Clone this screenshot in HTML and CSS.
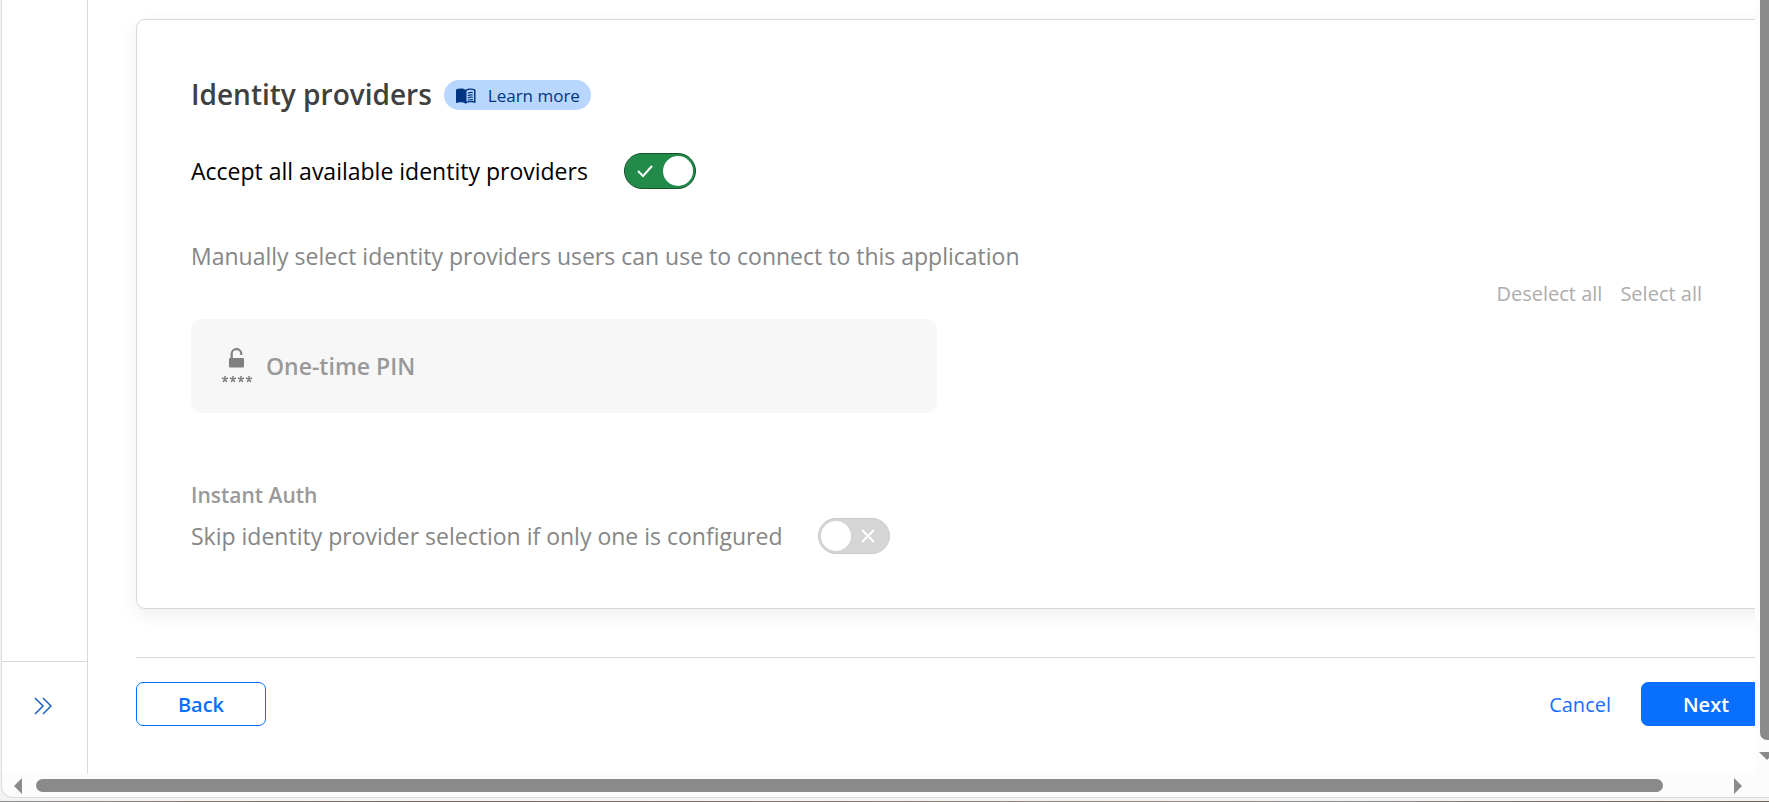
FILE: index.html
```html
<!DOCTYPE html>
<html lang="en">
<head>
  <meta charset="UTF-8">
  <meta name="viewport" content="width=device-width, initial-scale=1.0">
  <title>Identity providers</title>
  <link rel="stylesheet" href="styles.css">
</head>
<body>
  <div class="window">
    <div class="view">
      <nav class="sidebar" aria-label="Sidebar">
        <div class="sidebar-footer">
          <button type="button" class="expand" aria-label="Expand sidebar">
            <svg width="18" height="18" viewBox="0 0 18 18" fill="none" stroke="currentColor" stroke-width="1.5">
              <path d="M1 1l8 8-8 8M9 1l8 8-8 8"/>
            </svg>
          </button>
        </div>
      </nav>

      <main class="main">
        <div class="content">
          <section class="card">
            <div class="card-header">
              <h2>Identity providers</h2>
              <a href="#" class="pill">
                <svg width="20" height="16" viewBox="0 0 20 16">
                  <path fill="currentColor" d="M0 1.500C3 0 7 0 9.500 1.700C12 0 16 0 19.500 1.500V15C16 14 12.500 14 9.500 15.800C7 14 3 14 0 15Z"/>
                  <path fill="#b9d6ff" d="M10.500 2.800C13 1.500 16 1.600 18 2.500V13.300C16 12.600 13 12.700 10.500 13.700Z"/>
                  <path fill="none" stroke="currentColor" stroke-width="1.200" d="M11.800 5.200q2.500-1.200 5-.6M11.800 7.600q2.500-1.200 5-.6M11.800 10q2.500-1.200 5-.6M11.800 12.300q2.500-1.200 5-.6"/>
                </svg>
                Learn more
              </a>
            </div>

            <div class="setting">
              <label for="accept-all">Accept all available identity providers</label>
              <span class="toggle">
                <input type="checkbox" id="accept-all" checked>
                <svg width="16" height="14" viewBox="0 0 16 14" fill="none" stroke="#fff" stroke-width="2">
                  <path d="M1 7l5 5 9-10"/>
                </svg>
              </span>
            </div>

            <p class="hint">Manually select identity providers users can use to connect to this application</p>
            <div class="bulk-actions">
              <button type="button" disabled>Deselect all</button>
              <button type="button" disabled>Select all</button>
            </div>

            <div class="providers">
              <div class="provider">
                <svg width="32" height="36" viewBox="0 0 32 36">
                  <path fill="none" stroke="#808080" stroke-width="2.200" d="M10.700 11V6.500a4.800 4.800 0 0 1 9.600-1v1.500"/>
                  <rect x="8" y="10" width="15" height="9.500" rx="1" fill="#808080"/>
                  <path fill="none" stroke="#808080" stroke-width="1.500" d="M4 28v3.200M1 30l3 1.200 3-1.200M2.200 34l1.800-2.800 1.800 2.800M12 28v3.200M9 30l3 1.200 3-1.200M10.200 34l1.800-2.800 1.800 2.800M20 28v3.200M17 30l3 1.200 3-1.200M18.200 34l1.800-2.800 1.800 2.800M28 28v3.200M25 30l3 1.200 3-1.200M26.200 34l1.800-2.800 1.800 2.800"/>
                </svg>
                One-time PIN
              </div>
            </div>

            <h3>Instant Auth</h3>
            <div class="setting disabled">
              <label for="instant-auth">Skip identity provider selection if only one is configured</label>
              <span class="toggle">
                <input type="checkbox" id="instant-auth" disabled>
                <svg width="14" height="14" viewBox="0 0 14 14" fill="none" stroke="#fff" stroke-width="2">
                  <path d="M1 1l12 12M13 1L1 13"/>
                </svg>
              </span>
            </div>
          </section>

          <footer class="actions">
            <button type="button" class="btn btn-outline">Back</button>
            <a href="#" class="cancel">Cancel</a>
            <button type="button" class="btn btn-primary">Next</button>
          </footer>
        </div>
      </main>

      <div class="scroll-y">
        <div class="thumb-y"></div>
        <svg width="16" height="8" viewBox="0 0 16 8"><path fill="#8a8a8a" d="M0 0h16L8 8z"/></svg>
      </div>
    </div>

    <div class="scroll-x">
      <svg width="8" height="16" viewBox="0 0 8 16"><path fill="#8a8a8a" d="M8 0v16L0 8z"/></svg>
      <div class="track-x"><div class="thumb-x"></div></div>
      <svg width="8" height="16" viewBox="0 0 8 16"><path fill="#8a8a8a" d="M0 0v16l8-8z"/></svg>
    </div>
  </div>
  <div class="desktop"></div>
</body>
</html>
```
FILE: styles.css
```css
* {
  box-sizing: border-box;
}

body {
  margin: 0;
  height: 100vh;
  display: flex;
  flex-direction: column;
  overflow: hidden;
  background: #f3f3f3;
  color: #000;
  font-family: "Open Sans", "Noto Sans", sans-serif;
  font-size: 23px;
  line-height: 32px;
}

button {
  font: inherit;
  cursor: pointer;
}

.window {
  flex: 1;
  min-height: 0;
  display: flex;
  flex-direction: column;
  margin: 0 0 3px 1px;
  border: 1px solid #dcdcdc;
  border-width: 0 0 1px 1px;
  border-bottom-left-radius: 12px;
  background: #fcfcfc;
  overflow: hidden;
}

.view {
  flex: 1;
  min-height: 0;
  display: flex;
}

/* sidebar */
.sidebar {
  flex: none;
  width: 86px;
  display: flex;
  flex-direction: column;
  justify-content: flex-end;
  border-right: 1px solid #d9d9d9;
  background: #fff;
}

.sidebar-footer {
  height: 113px;
  padding: 26px 2px 0 0;
  border-top: 1px solid #d9d9d9;
  text-align: center;
}

.expand {
  width: 36px;
  height: 36px;
  padding: 8px;
  border: none;
  background: none;
  color: #1a5fc8;
}

.expand svg {
  display: block;
}

/* main */
.main {
  flex: 1;
  min-width: 0;
  overflow: hidden;
  background: #fff;
}

.content {
  width: calc(100% + 16px);
  padding: 19px 0 0 48px;
}

.card {
  padding: 54px;
  border: 1px solid #d9d9d9;
  border-radius: 9px;
  background: #fff;
  box-shadow: 0 6px 18px rgba(0, 0, 0, 0.07);
}

.card-header {
  display: flex;
  align-items: center;
  gap: 12px;
  height: 40px;
  margin-bottom: 39px;
}

h2 {
  margin: 0;
  color: #404040;
  font-size: 28px;
  font-weight: 600;
  line-height: 38px;
}

.pill {
  display: flex;
  align-items: center;
  gap: 12px;
  height: 30px;
  margin-top: 2px;
  padding: 2px 11px 0 12px;
  border-radius: 15px;
  background: #b9d6ff;
  color: #003681;
  font-size: 17px;
  text-decoration: none;
}

.setting {
  display: flex;
  align-items: center;
  gap: 36px;
  height: 36px;
}

.toggle {
  position: relative;
  display: flex;
  width: 72px;
  height: 36px;
}

.toggle input {
  appearance: none;
  width: 100%;
  height: 100%;
  margin: 0;
  padding: 2px;
  border: 1px solid #cbcbcb;
  border-radius: 18px;
  background: #d5d5d5;
}

.toggle input::before {
  content: "";
  display: block;
  width: 30px;
  height: 30px;
  border-radius: 50%;
  background: #fff;
}

.toggle input:checked {
  border-color: #14532d;
  background: #228b49;
}

.toggle input:checked::before {
  margin-left: auto;
}

.toggle svg {
  position: absolute;
  top: 11px;
  right: 15px;
  pointer-events: none;
}

.toggle input:checked + svg {
  right: auto;
  left: 13px;
}

.disabled,
.hint {
  color: #868686;
}

.hint {
  margin: 51px 0 6px;
}

.bulk-actions {
  display: flex;
  justify-content: flex-end;
  gap: 18px;
  padding-right: 14px;
  font-size: 20px;
}

.bulk-actions button {
  padding: 0;
  border: none;
  background: none;
  color: #adadad;
  cursor: default;
}

.providers {
  display: grid;
  grid-template-columns: 1fr 1fr;
  gap: 34px;
  margin: 9px 0 66px;
}

.provider {
  display: flex;
  align-items: center;
  gap: 13px;
  height: 94px;
  padding: 0 30px;
  border-radius: 12px;
  background: #f7f7f7;
  color: #999;
  font-weight: 600;
}

h3 {
  margin: 0 0 7px;
  color: #999;
  font-size: 21px;
  font-weight: 600;
}

.actions {
  display: flex;
  align-items: center;
  margin-top: 48px;
  padding-top: 24px;
  border-top: 1px solid #d9d9d9;
}

.btn {
  min-width: 130px;
  height: 44px;
  padding: 2px 40px 0;
  border: 1px solid #086fff;
  border-radius: 7px;
  font-size: 20px;
  font-weight: 600;
}

.btn-outline {
  background: #fff;
  color: #086fff;
}

.btn-primary {
  background: #086fff;
  color: #fff;
}

.cancel {
  margin: 2px 30px 0 auto;
  color: #1a6dff;
  font-size: 20px;
  text-decoration: none;
}

/* scrollbars */
.scroll-y {
  flex: none;
  width: 14px;
  padding-left: 5px;
  display: flex;
  flex-direction: column;
  overflow: hidden;
}

.thumb-y {
  flex: 1;
  width: 14px;
  margin-bottom: 12px;
  border-bottom-left-radius: 7px;
  background: #8a8a8a;
}

.scroll-y svg {
  flex: none;
  margin: 0 0 14px -1px;
}

.scroll-x {
  flex: none;
  display: flex;
  align-items: center;
  gap: 14px;
  height: 23px;
  padding: 0 27px 0 12px;
}

.track-x {
  flex: 1;
}

.thumb-x {
  height: 13px;
  margin-right: 57px;
  border-radius: 7px;
  background: #8a8a8a;
}

.desktop {
  height: 1px;
  background: linear-gradient(to right, #8a8a8a, #7d6a60, #8f7b70, #8a8a8a, #6f625c);
}
```
